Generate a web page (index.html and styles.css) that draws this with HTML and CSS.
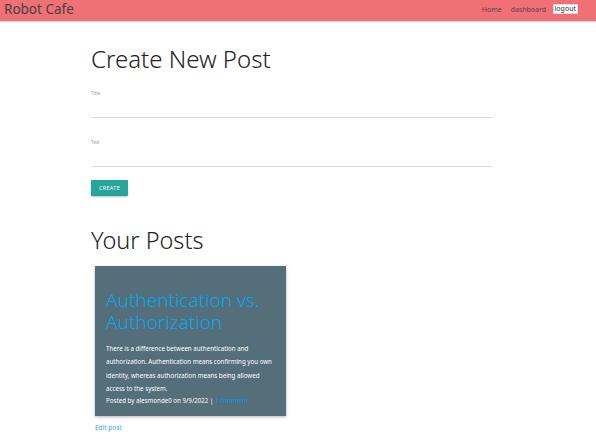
FILE: index.html
```html
<!DOCTYPE html>
<html>
<head>
<meta charset="utf-8">
<link rel="stylesheet" href="styles.css">
</head>
<body>
<nav class="navbar">
  <a class="brand">Robot Cafe</a>
  <ul class="nav-links">
    <li class="nav-item"><a class="nav-link">Home</a></li>
    <li class="nav-item"><a class="nav-link">dashboard</a></li>
    <li class="nav-item"><button class="logout">logout</button></li>
  </ul>
</nav>
<main class="container">
  <h1 class="heading create-heading">Create New Post</h1>
  <form class="post-form">
    <div class="field">
      <label class="field-label">Title</label>
      <div class="field-line"></div>
    </div>
    <div class="field">
      <label class="field-label">Text</label>
      <div class="field-line"></div>
    </div>
    <button type="button" class="btn-create">CREATE</button>
  </form>
  <h1 class="heading posts-heading">Your Posts</h1>
  <div class="post">
    <div class="card">
      <h2 class="card-title">Authentication vs. Authorization</h2>
      <p class="card-text">There is a difference between authentication and authorization. Authentication means confirming you own identity, whereas authorization means being allowed access to the system.</p>
      <p class="card-meta">Posted by alesmonde0 on 9/9/2022 | <a class="comment-link">1 comment</a></p>
    </div>
    <a class="edit-link">Edit post</a>
  </div>
</main>
</body>
</html>
```
FILE: styles.css
```css
* { box-sizing: border-box; }
body {
  margin: 0;
  font-family: "Noto Sans", "Open Sans", sans-serif;
  color: #222;
  background: #fff;
}
.navbar {
  height: 21px;
  background: #f07076;
  display: flex;
  align-items: flex-start;
  justify-content: space-between;
  padding: 0 18px 0 4px;
  box-shadow: 0 1px 1px rgba(0,0,0,0.18);
}
.brand {
  font-size: 13.5px;
  color: #444;
  line-height: 19px;
}
.nav-links {
  list-style: none;
  margin: 0;
  padding: 4px 0 0;
  display: flex;
  align-items: center;
}
.nav-item {
  display: flex;
  align-items: center;
  height: 10px;
}
.nav-link {
  font-size: 7px;
  color: #5a4548;
  padding: 0 4.5px;
  display: block;
  line-height: 9px;
}
.logout {
  font-family: inherit;
  font-size: 7px;
  background: #fff;
  color: #333;
  border: 1px solid #ddd;
  padding: 0 1px;
  height: 10px;
  line-height: 8px;
  margin: 0 0 0 2px;
  display: block;
}
.container {
  width: 402px;
  margin-left: 91px;
}
.heading {
  font-weight: 300;
  font-size: 24px;
  margin: 0;
  line-height: 1;
  color: #222;
}
.create-heading { padding-top: 26px; }
.post-form {
  margin-top: 19px;
  display: flex;
  flex-direction: column;
  align-items: flex-start;
  gap: 21px;
}
.field { width: 100%; }
.field-label {
  display: block;
  font-size: 4.5px;
  color: #9e9e9e;
  height: 27px;
}
.field-line { border-bottom: 1px solid #ddd; }
.btn-create {
  margin-top: -8px;
  background: #26a69a;
  color: #fff;
  font-family: inherit;
  font-size: 5.5px;
  letter-spacing: 0.3px;
  border: none;
  border-radius: 1px;
  width: 37px;
  height: 16px;
  padding: 0;
  box-shadow: 0 1px 2px rgba(0,0,0,0.25);
}
.posts-heading { margin-top: 33px; font-size: 23.5px; }
.post { margin-top: 13px; margin-left: 4px; width: 191px; }
.card {
  background: #546e7a;
  padding: 23px 8px 4px 11px;
  box-shadow: 0 1px 3px rgba(0,0,0,0.3);
  min-height: 150px;
}
.card-title {
  margin: 0;
  font-weight: 300;
  font-size: 19px;
  line-height: 22px;
  color: #03a9f4;
}
.card-text {
  margin: 9px 0 0;
  font-size: 6.2px;
  line-height: 13.5px;
  color: #fff;
}
.card-meta {
  margin: 0;
  font-size: 6.2px;
  line-height: 10px;
  color: #fff;
}
.comment-link { color: #039be5; }
.edit-link {
  display: block;
  margin-top: 7px;
  font-size: 6.5px;
  color: #42a5f5;
}
```
